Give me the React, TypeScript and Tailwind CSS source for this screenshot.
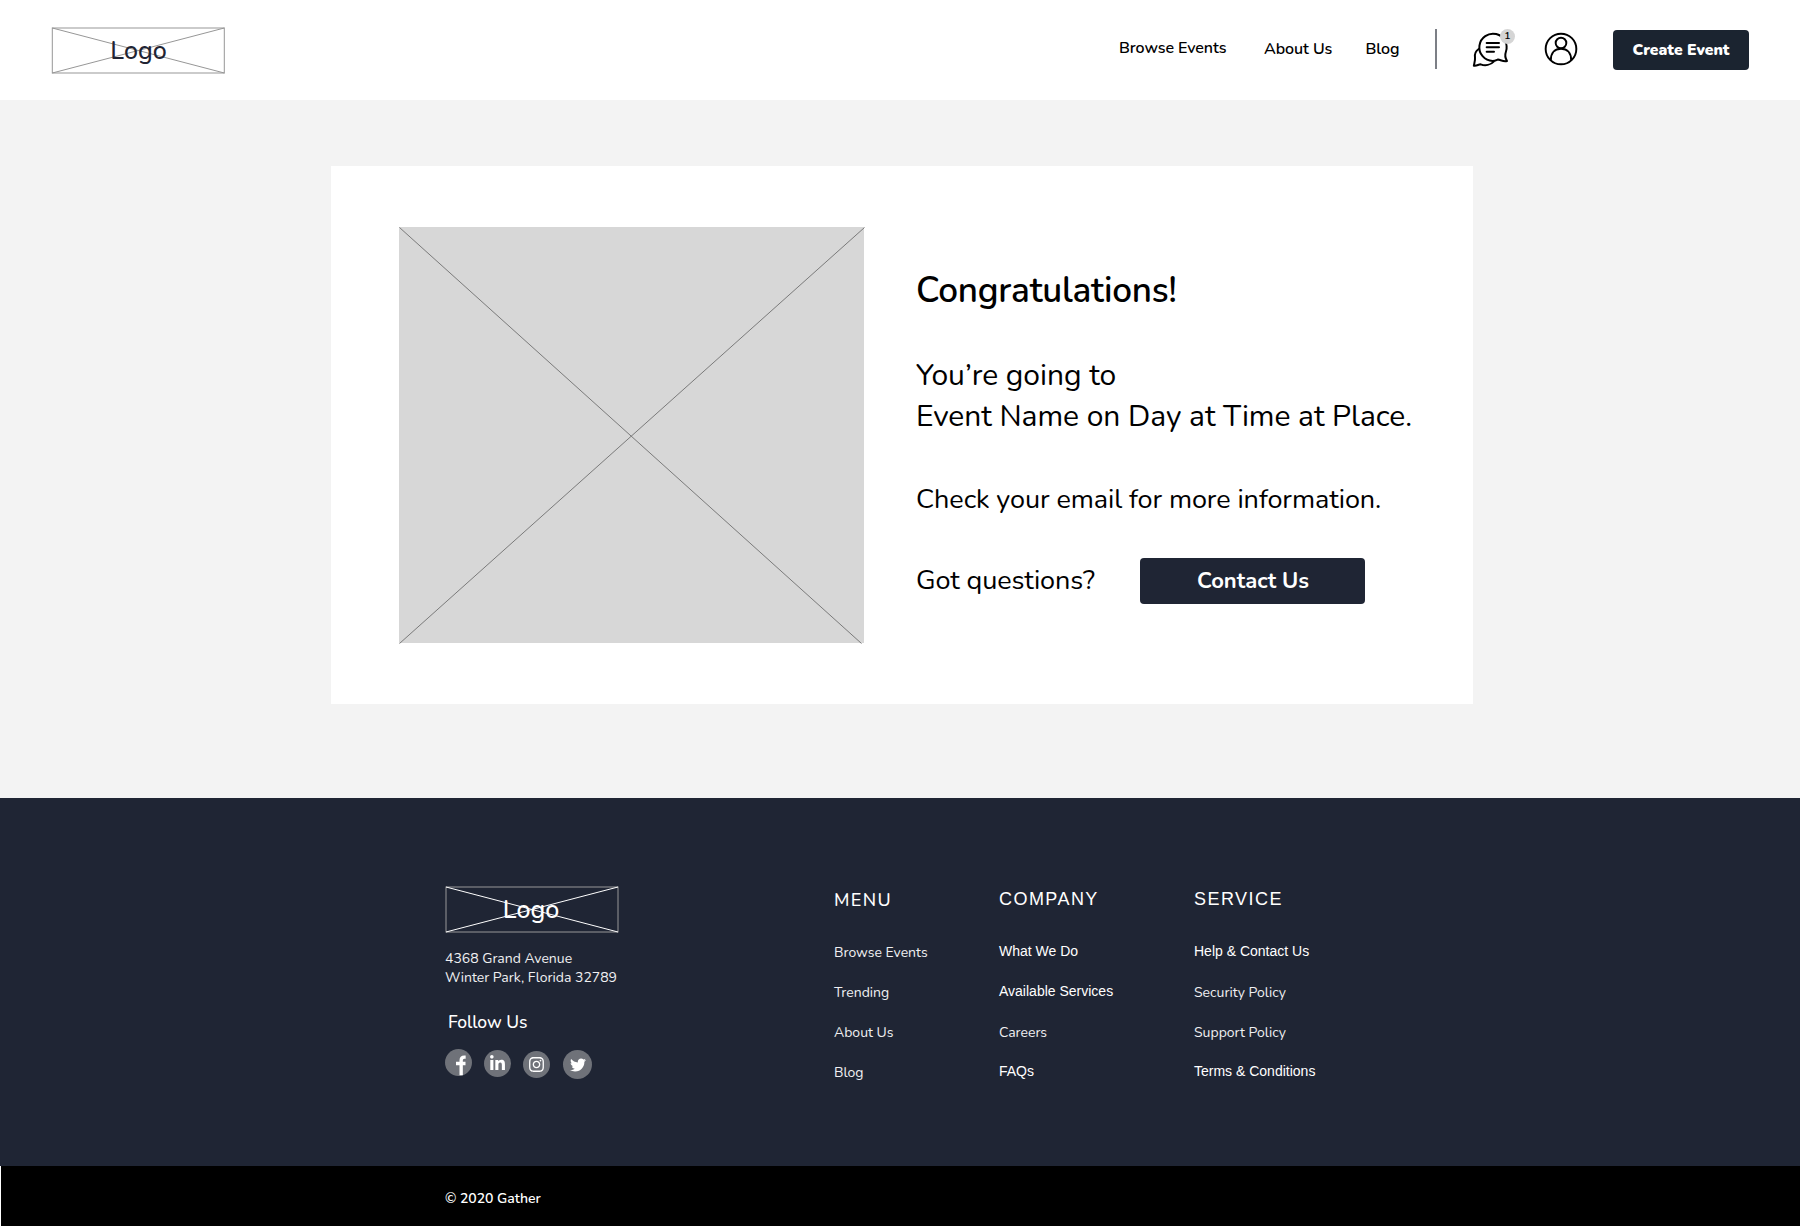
import React from "react";
import { FaInstagram, FaLinkedinIn, FaTwitter } from "react-icons/fa";

function Logo({ inset, lineClass, textClass }: { inset: number; lineClass: string; textClass: string }) {
  const right = inset + 172;
  return (
    <div className="relative h-[50px] w-[176px]">
      <svg className="block" width="176" height="50" viewBox="0 0 176 50" fill="none">
        <rect x={inset} y="3" width="172" height="45" stroke="#979797" />
        <path className={lineClass} d={`M${inset} 3L${right} 48M${inset} 48L${right} 3`} />
      </svg>
      <span className={`absolute inset-x-0 top-0 text-center text-[25px] font-medium leading-[53px] ${textClass}`}>Logo</span>
    </div>
  );
}

function MessagesIcon() {
  return (
    <div className="relative h-10 w-11">
      <svg className="block" width="44" height="40" viewBox="36 24 132 120" fill="none" stroke="#000" strokeWidth="6" strokeLinecap="round" strokeLinejoin="round">
        <path d="M56 87C47 93 43 101 45 113C46 122 43 130 41.500 137C50 139 55 133 62 133C76 138 92 135 101 125" />
        <path d="M141 123C136 115 134 106 137.500 96A41 41 0 1 0 98 123C106 123 110 120 114 118.500C124 121 132 126 141 123Z" />
        <path d="M80 69H117M80 82H117M80 95H102" />
      </svg>
      <span className="absolute left-[28px] top-[1px] flex size-[15px] items-center justify-center rounded-full bg-[#d5d5d5] text-[10.5px] font-semibold leading-none text-black">1</span>
    </div>
  );
}

function ProfileIcon() {
  return (
    <svg className="block" width="34" height="34" viewBox="0 0 102 102" fill="none" stroke="#000" strokeWidth="5.8">
      <circle cx="51" cy="51" r="46" />
      <circle cx="51" cy="33" r="16" />
      <path d="M20.500 84C20.500 62 33 50 51 50C69 50 81.500 62 81.500 84" />
    </svg>
  );
}

type FooterLink = { label: string; alt?: boolean };

function FooterColumn({ title, altTitle, links, className }: { title: string; altTitle?: boolean; links: FooterLink[]; className: string }) {
  return (
    <div className={`shrink-0 text-white ${className}`}>
      <h3
        className={
          altTitle
            ? "h-[54px] font-['Liberation_Sans',sans-serif] text-[18px] leading-6 tracking-[1.45px]"
            : "h-[54px] pt-px text-[18px] font-medium leading-6 tracking-[1.4px]"
        }
      >
        {title}
      </h3>
      <ul>
        {links.map((link) => (
          <li
            key={link.label}
            className={
              link.alt
                ? "h-10 whitespace-nowrap font-['Liberation_Sans',sans-serif] text-[14px] leading-5"
                : "h-10 whitespace-nowrap pt-0.5 text-[14px] leading-5 text-[#f0f0f2]"
            }
          >
            {link.label}
          </li>
        ))}
      </ul>
    </div>
  );
}

export default function App() {
  return (
    <div className="h-[1226px] w-[1803px] overflow-hidden bg-white font-['Nunito','Lato',sans-serif] text-black">
      <header className="flex h-[100px] w-[1800px] items-start">
        <div className="ml-[50px] mt-[25px]">
          <Logo inset={2.3} lineClass="stroke-[#979797]" textClass="pl-px text-[#1f2433]" />
        </div>
        <nav className="ml-[893px] flex text-[16px] font-semibold leading-6 tracking-[-0.08px]">
          <a className="mt-9 w-[145px]">Browse Events</a>
          <a className="mt-[37px] w-[101.5px]">About Us</a>
          <a className="mt-[37px] w-[69.5px]">Blog</a>
        </nav>
        <div className="mt-[29px] h-10 w-0.5 bg-[#7c7f86]" />
        <div className="ml-[35px] mt-7">
          <MessagesIcon />
        </div>
        <div className="ml-7 mt-8">
          <ProfileIcon />
        </div>
        <button className="ml-[35px] mt-[30px] h-10 w-[136px] rounded-[4px] bg-[#1b2430] text-[15.6px] font-black leading-6 text-white">Create Event</button>
      </header>

      <main className="flex h-[698px] w-[1800px] items-start bg-[#f3f3f3] pl-[331px] pt-[66px]">
        <section className="flex h-[538px] w-[1142px] items-start bg-white pl-[68px]">
          <div className="mt-[61px] h-[416px] w-[465px] bg-[#d7d7d7]">
            <svg className="block overflow-visible" width="465" height="416" viewBox="0 0 465 416" fill="none" stroke="#757575" strokeWidth="0.95">
              <path d="M0.500 0.500L462.500 416.500M0.500 416.500L465.500 0.500" />
            </svg>
          </div>
          <div className="ml-[52px] pt-[101px]">
            <h1 className="text-[35px] font-semibold leading-[48px] tracking-[-0.2px]">Congratulations!</h1>
            <p className="mt-10 whitespace-nowrap text-[30px] leading-[41px] tracking-[-0.04px]">
              You’re going to
              <br />
              Event Name on Day at Time at Place.
            </p>
            <p className="mt-[45px] whitespace-nowrap text-[27px] leading-9 tracking-[-0.08px]">Check your email for more information.</p>
            <div className="mt-10 flex">
              <p className="w-[224px] pt-[5px] text-[27px] leading-9 tracking-[-0.08px]">Got questions?</p>
              <button className="h-[46px] w-[225px] rounded-[4px] bg-[#1f2534] pl-px text-[22px] font-bold leading-[30px] text-white">Contact Us</button>
            </div>
          </div>
        </section>
      </main>

      <footer className="w-[1800px]">
        <div className="flex h-[368px] items-start bg-[#1f2534]">
          <div className="ml-[444px] mt-[86px] w-[390px] text-white">
            <Logo inset={2} lineClass="stroke-white" textClass="pr-[2px] text-white" />
            <address className="ml-px mt-[15px] text-[14px] not-italic leading-[19px] text-[#f0f0f2]">
              4368 Grand Avenue
              <br />
              Winter Park, Florida 32789
            </address>
            <h3 className="ml-1 mt-[23px] text-[17.5px] font-medium leading-6 tracking-[-0.05px]">Follow Us</h3>
            <div className="ml-px mt-[15px] flex items-start">
              <svg className="block" width="27" height="27" viewBox="0 0 81 81" fill="none">
                <circle cx="40.5" cy="40.5" r="40.5" fill="#6f7279" />
                <path d="M62 24.500H58Q48.500 24.500 48.500 34V79M33 43.500H61.500" stroke="#fff" strokeWidth="10" />
              </svg>
              <span className="ml-3 mt-px flex size-[27px] items-center justify-center rounded-full bg-[#6f7279] pb-px">
                <FaLinkedinIn size={17} />
              </span>
              <span className="ml-3 mt-0.5 flex size-[27px] items-center justify-center rounded-full bg-[#6f7279]">
                <FaInstagram size={17} />
              </span>
              <span className="ml-[13px] mt-px flex size-[29px] items-center justify-center rounded-full bg-[#6f7279] pl-px pt-px">
                <FaTwitter size={16} />
              </span>
            </div>
          </div>
          <FooterColumn
            className="mt-[89px] w-[165px]"
            title="MENU"
            links={[{ label: "Browse Events" }, { label: "Trending" }, { label: "About Us" }, { label: "Blog" }]}
          />
          <FooterColumn
            className="mt-[89px] w-[195px]"
            title="COMPANY"
            altTitle
            links={[{ label: "What We Do", alt: true }, { label: "Available Services", alt: true }, { label: "Careers" }, { label: "FAQs", alt: true }]}
          />
          <FooterColumn
            className="mt-[89px]"
            title="SERVICE"
            altTitle
            links={[{ label: "Help & Contact Us", alt: true }, { label: "Security Policy" }, { label: "Support Policy" }, { label: "Terms & Conditions", alt: true }]}
          />
        </div>
        <div className="ml-px h-[60px] bg-black pl-[444px] pt-[23px] text-[14px] font-semibold leading-5 tracking-[-0.05px] text-white">© 2020 Gather</div>
      </footer>
    </div>
  );
}
